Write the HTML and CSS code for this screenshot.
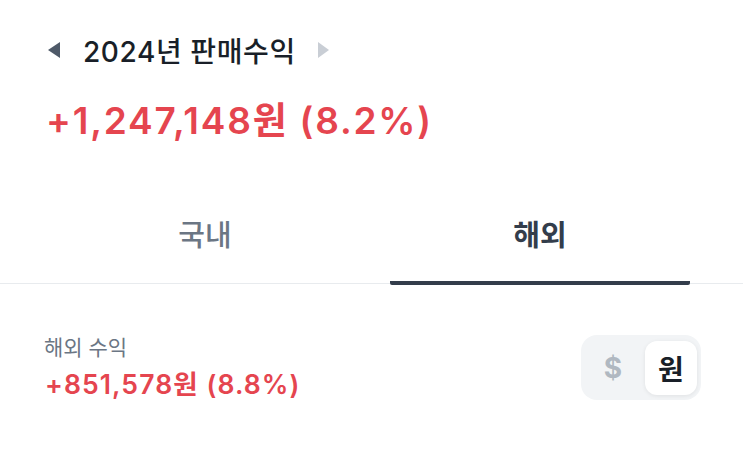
FILE: index.html
```html
<!DOCTYPE html>
<html lang="ko">
<head>
<meta charset="utf-8">
<link rel="stylesheet" href="styles.css">
</head>
<body>
<div class="page">
  <div class="year-row">
    <span class="arrow arrow-left"></span>
    <span class="year-title">2024년 판매수익</span>
    <span class="arrow arrow-right"></span>
  </div>
  <div class="total">+1,247,148원 (8.2%)</div>
  <div class="tabs">
    <div class="tab">국내</div>
    <div class="tab active">해외</div>
  </div>
  <div class="section">
    <div class="section-info">
      <div class="section-label">해외 수익</div>
      <div class="section-amount">+851,578원 (8.8%)</div>
    </div>
    <div class="toggle">
      <span class="toggle-opt">$</span>
      <span class="toggle-opt selected">원</span>
    </div>
  </div>
</div>
</body>
</html>
```
FILE: styles.css
```css
* { box-sizing: border-box; }
html, body { margin: 0; padding: 0; background: #fff; }
body {
  font-family: "Inter", "Noto Sans CJK KR", sans-serif;
  color: #191f28;
  width: 743px;
  height: 451px;
  overflow: hidden;
}
.page { padding-top: 30px; }
.year-row {
  display: flex;
  align-items: center;
  padding-left: 48px;
  height: 40px;
}
.arrow {
  width: 0; height: 0;
  border-top: 8px solid transparent;
  border-bottom: 8px solid transparent;
}
.arrow-left { border-right: 12px solid #4e5968; margin-right: 23px; }
.arrow-right { border-left: 11px solid #c9ced5; margin-left: 22px; }
.year-title {
  font-size: 28px;
  font-weight: 500;
  letter-spacing: 0.6px;
  color: #191f28;
}
.total {
  padding-left: 46px;
  margin-top: 27px;
  font-size: 37px;
  font-weight: 600;
  letter-spacing: 1.8px;
  color: #e5454f;
  line-height: 48px;
}
.tabs {
  display: grid;
  grid-template-columns: 370px 300px;
  padding: 0 52px 0 20px;
  margin-top: 62px;
  background: linear-gradient(to top, transparent 1px, #e8ebee 1px, #e8ebee 2px, transparent 2px);
}
.tab {
  text-align: center;
  font-size: 29px;
  font-weight: 500;
  color: #6b7684;
  height: 78px;
  line-height: 58px;
  border-bottom: 4px solid transparent;
}
.tab.active {
  color: #333d4b;
  font-weight: 700;
  border-bottom-color: #333d4b;
  border-radius: 0 0 2px 2px;
}
.section {
  display: flex;
  justify-content: space-between;
  align-items: flex-start;
  padding: 50px 42px 0 44px;
}
.section-label {
  font-size: 21px;
  color: #6b7684;
  line-height: 26px;
}
.section-amount {
  margin-top: 6px;
  margin-left: 1px;
  font-size: 26.5px;
  font-weight: 600;
  letter-spacing: 1.1px;
  color: #e5454f;
  line-height: 34px;
}
.toggle {
  display: flex;
  align-items: center;
  gap: 6px;
  width: 120px;
  height: 65px;
  padding: 6px 4px 6px 6px;
  background: #f2f4f6;
  border-radius: 16px;
}
.toggle-opt {
  width: 54px;
  height: 54px;
  display: flex;
  align-items: center;
  justify-content: center;
  font-size: 28px;
  font-weight: 700;
  color: #b0b8c1;
}
.toggle-opt.selected {
  background: #fff;
  color: #191f28;
  border-radius: 12px;
  box-shadow: 0 1px 4px rgba(0,0,0,0.08);
}
```
